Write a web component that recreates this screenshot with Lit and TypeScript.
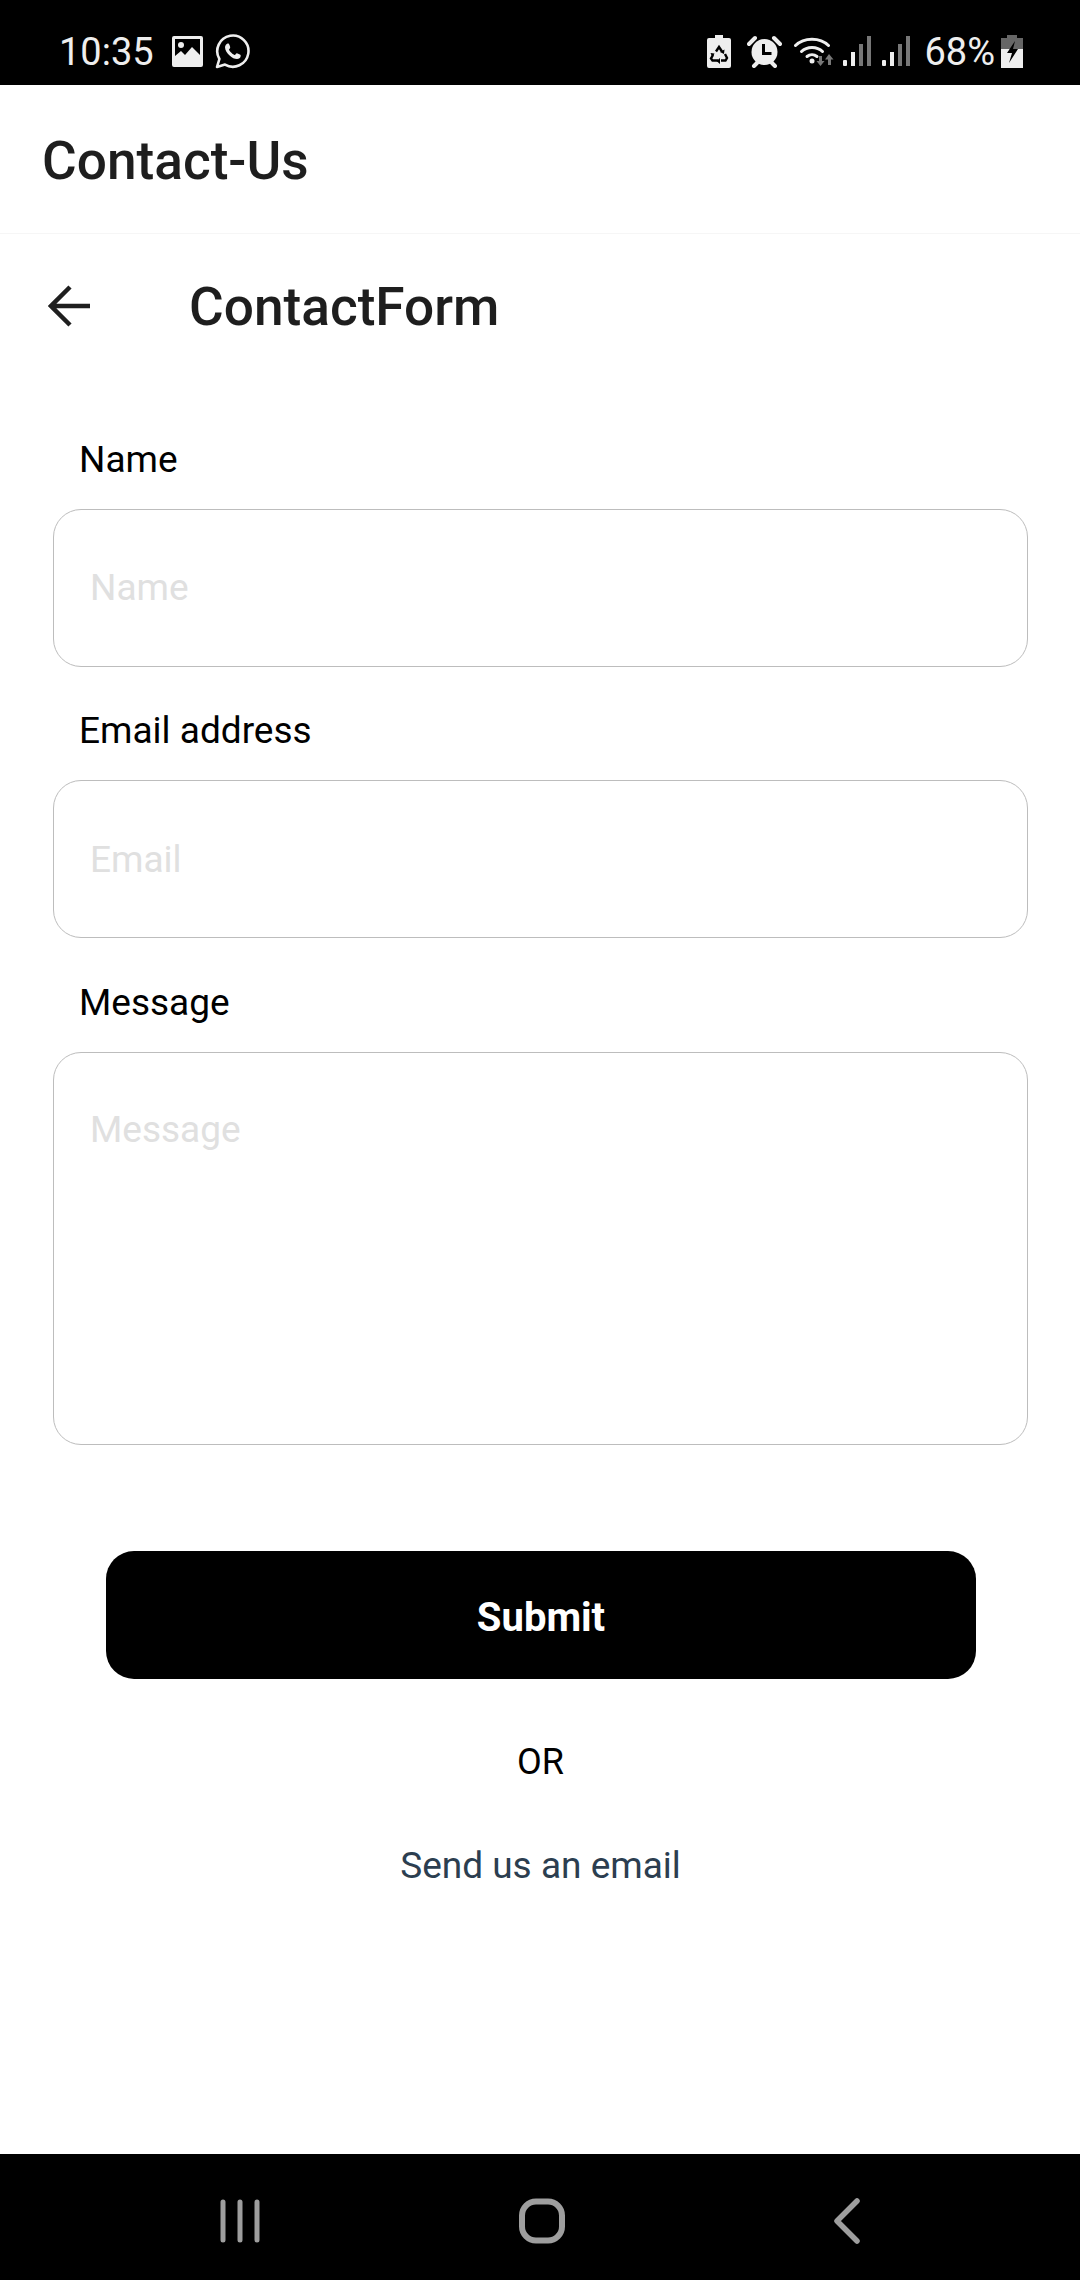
import { LitElement, html, css, svg } from "lit";
import { customElement } from "lit/decorators.js";

const picture = svg`<svg class="ic" width="31" height="31" viewBox="0 0 31 31"><path fill="#eee" fill-rule="evenodd" d="M2 0h27a2 2 0 0 1 2 2v27a2 2 0 0 1-2 2H2a2 2 0 0 1-2-2V2a2 2 0 0 1 2-2zM3 3v17l6-5 4 4 7-8 8 8V3z"/><circle cx="9" cy="9" r="3" fill="#eee"/></svg>`;
const whatsapp = svg`<svg class="ic" width="35" height="35" viewBox="0 0 35 35"><path fill="none" stroke="#eee" stroke-width="2.6" stroke-linejoin="round" d="M2 33l2.4-8A15.6 15.6 0 1 1 10 30.6z"/><path fill="#eee" d="M12.6 9.4c-1 .2-2.6 1.8-2.6 3.8 0 3 2.2 6 4.6 8.2 2.4 2.2 5 3.6 7.4 3.6 2 0 3.4-1.4 3.6-2.6.1-.6.1-1.2 0-1.4-.5-.4-3.2-1.8-3.8-1.8-.6 0-1.4 1.6-2 1.8-1.2.2-5.6-3.6-5.8-5.4-.1-.8 1.2-1.2 1.2-2.2 0-.6-1-3.4-1.6-3.8-.4-.2-.8-.2-1-.2z"/></svg>`;
const recycleBattery = svg`<svg class="ic" width="24" height="33" viewBox="0 0 24 33"><path fill="#eee" d="M8 0h8v3h6a2 2 0 0 1 2 2v26a2 2 0 0 1-2 2H2a2 2 0 0 1-2-2V5a2 2 0 0 1 2-2h6z"/><g fill="none" stroke="#000" stroke-width="2.400"><path d="M9 16.500l3-4.500 3 4.500"/><path d="M6 20l-2 3.500 1.500 2H11"/><path d="M18 19l2 4-1.500 2.500H14"/></g><path fill="#000" d="M17.500 14.500l-.5 4.500-4-2zM3.500 18l4 .5-2 4zM13 23v6l-3.500-3z"/></svg>`;
const alarm = svg`<svg class="ic" width="35" height="33" viewBox="0 0 35 33"><circle cx="17.500" cy="17" r="13" fill="#eee"/><path stroke="#eee" stroke-width="4" stroke-linecap="round" d="M2 9l6-6M33 9l-6-6M7 31l3-3M28 31l-3-3"/><path fill="none" stroke="#000" stroke-width="3" d="M16.500 9v9.500h8"/></svg>`;
const wifi = svg`<svg class="ic" width="42" height="30" viewBox="0 0 42 30"><g fill="none" stroke="#eee" stroke-width="3" stroke-linecap="round"><path d="M1.500 9.500C10 1 26 1 34.500 9.500"/><path d="M7.500 15.500C13 10 23 10 28.500 15.500"/><path d="M13 20.500c3-2.500 7-2.500 10 0"/></g><circle cx="18" cy="25" r="2.500" fill="#eee"/><path fill="#777" d="M25 20h3v5h2.500l-4 5-4-5H25z"/><path fill="#777" d="M35 18l4.500 5.500H37V29h-3v-5.500h-3z"/></svg>`;
const signal = svg`<svg class="ic" width="28" height="30" viewBox="0 0 28 30"><rect x="0" y="24" width="4" height="6" rx="1" fill="#eee"/><rect x="8" y="16" width="4" height="14" fill="#eee"/><rect x="16" y="8" width="4" height="22" fill="#777"/><rect x="24" y="0" width="4" height="30" fill="#777"/></svg>`;
const battery = svg`<svg class="ic" width="22" height="33" viewBox="0 0 22 33"><path fill="#666" d="M6 0h10v3h6v11H0V3h6z"/><path fill="#eee" d="M0 14h22v19H0z"/><path fill="#000" d="M14 6L6 18h5l-3 10 9-14h-5z"/></svg>`;
const arrow = svg`<svg width="42" height="42" viewBox="0 0 42 42"><path fill="none" stroke="#1f1f1f" stroke-width="4.500" d="M42 21H3M22 2L3 21l19 19"/></svg>`;
const navBars = svg`<svg width="40" height="44" viewBox="0 0 40 44"><g stroke="#9e9e9e" stroke-width="5" stroke-linecap="round"><path d="M3 3v38M20 3v38M37 3v38"/></g></svg>`;
const navHome = svg`<svg width="46" height="46" viewBox="0 0 46 46"><rect x="3" y="3.500" width="40" height="39" rx="14" fill="none" stroke="#9e9e9e" stroke-width="6"/></svg>`;
const navBack = svg`<svg width="28" height="46" viewBox="0 0 28 46"><path fill="none" stroke="#9e9e9e" stroke-width="5.500" stroke-linecap="round" stroke-linejoin="round" d="M24 3L4 23l20 20"/></svg>`;

@customElement("app-root")
export class AppRoot extends LitElement {
  static styles = css`
    :host { display: block; width: 1080px; height: 2280px; font-family: Roboto, sans-serif; background: #fff; }
    .page { height: 2280px; display: flex; flex-direction: column; }
    .status { height: 85px; background: #000; color: #eee; font-size: 38px; display: flex; align-items: center; justify-content: space-between; padding: 0 57px 0 59px; box-sizing: border-box; flex: none; }
    .status-group { display: flex; align-items: center; margin-top: 17px; }
    .ic { display: block; flex: none; }
    .time { margin-right: 18px; padding-top: 2px; }
    .status-group .r16 { margin-right: 16px; }
    .status-group .r12 { margin-right: 12px; }
    .status-group .r7 { margin-right: 7px; }
    .status-group .r11 { margin-right: 11px; }
    .status-group .r14 { margin-right: 14px; }
    .pct { margin-right: 6px; padding-top: 2px; }
    .header { height: 145px; border-bottom: 1px solid #f6f6f6; display: flex; align-items: center; padding: 3px 0 0 42px; font-size: 53.200px; font-weight: 500; color: #1e1e1e; flex: none; }
    .sub { height: 146px; display: flex; align-items: center; padding-left: 48px; flex: none; font-size: 53.200px; font-weight: 500; color: #1e1e1e; }
    .sub .t { margin-left: 99px; }
    .back { display: flex; margin-top: -2px; }
    main { flex: 1; padding: 60px 52px 0 53px; display: flex; flex-direction: column; align-items: stretch; }
    .label { height: 40px; line-height: 40px; font-size: 37px; color: #000; padding-left: 26px; margin-bottom: 29px; }
    .field { height: 158px; box-sizing: border-box; border: 1.500px solid #bdbdbd; border-radius: 28px; padding: 0 0 2px 36px; display: flex; align-items: center; font-size: 37px; color: #e0e0e0; margin-bottom: 44px; background: #fff; }
    .mid { margin-bottom: 45px; padding-bottom: 0; }
    .area { height: 393px; align-items: flex-start; padding: 56px 0 0 36px; line-height: 42px; margin-bottom: 0; }
    button { display: block; margin: 106px 0 0 53px; width: 870px; height: 128px; border: 0; border-radius: 28px; background: #000; color: #fff; font: 700 40px Roboto, sans-serif; padding: 5px 0 0; }
    .or { text-align: center; font-size: 36px; line-height: 40px; color: #000; margin-top: 63px; }
    .email { text-align: center; font-size: 37px; line-height: 40px; color: #2c3e50; margin-top: 64px; }
    .nav { height: 126px; background: #000; flex: none; display: flex; align-items: center; padding: 7px 0 0 220px; box-sizing: border-box; }
    .nav svg { display: block; }
    .nav .bars { margin-right: 259px; }
    .nav .home { margin-right: 268px; }
  `;

  render() {
    return html`
      <div class="page">
        <div class="status">
          <div class="status-group">
            <span class="time">10:35</span>
            <span class="r12">${picture}</span>
            ${whatsapp}
          </div>
          <div class="status-group">
            <span class="r16">${recycleBattery}</span>
            <span class="r12">${alarm}</span>
            <span class="r7">${wifi}</span>
            <span class="r11">${signal}</span>
            <span class="r14">${signal}</span>
            <span class="pct">68%</span>
            ${battery}
          </div>
        </div>
        <div class="header">Contact-Us</div>
        <div class="sub"><span class="back">${arrow}</span><span class="t">ContactForm</span></div>
        <main>
          <div class="label">Name</div>
          <div class="field">Name</div>
          <div class="label">Email address</div>
          <div class="field mid">Email</div>
          <div class="label">Message</div>
          <div class="field area">Message</div>
          <button>Submit</button>
          <div class="or">OR</div>
          <div class="email">Send us an email</div>
        </main>
        <div class="nav">
          <span class="bars">${navBars}</span>
          <span class="home">${navHome}</span>
          <span>${navBack}</span>
        </div>
      </div>
    `;
  }
}
